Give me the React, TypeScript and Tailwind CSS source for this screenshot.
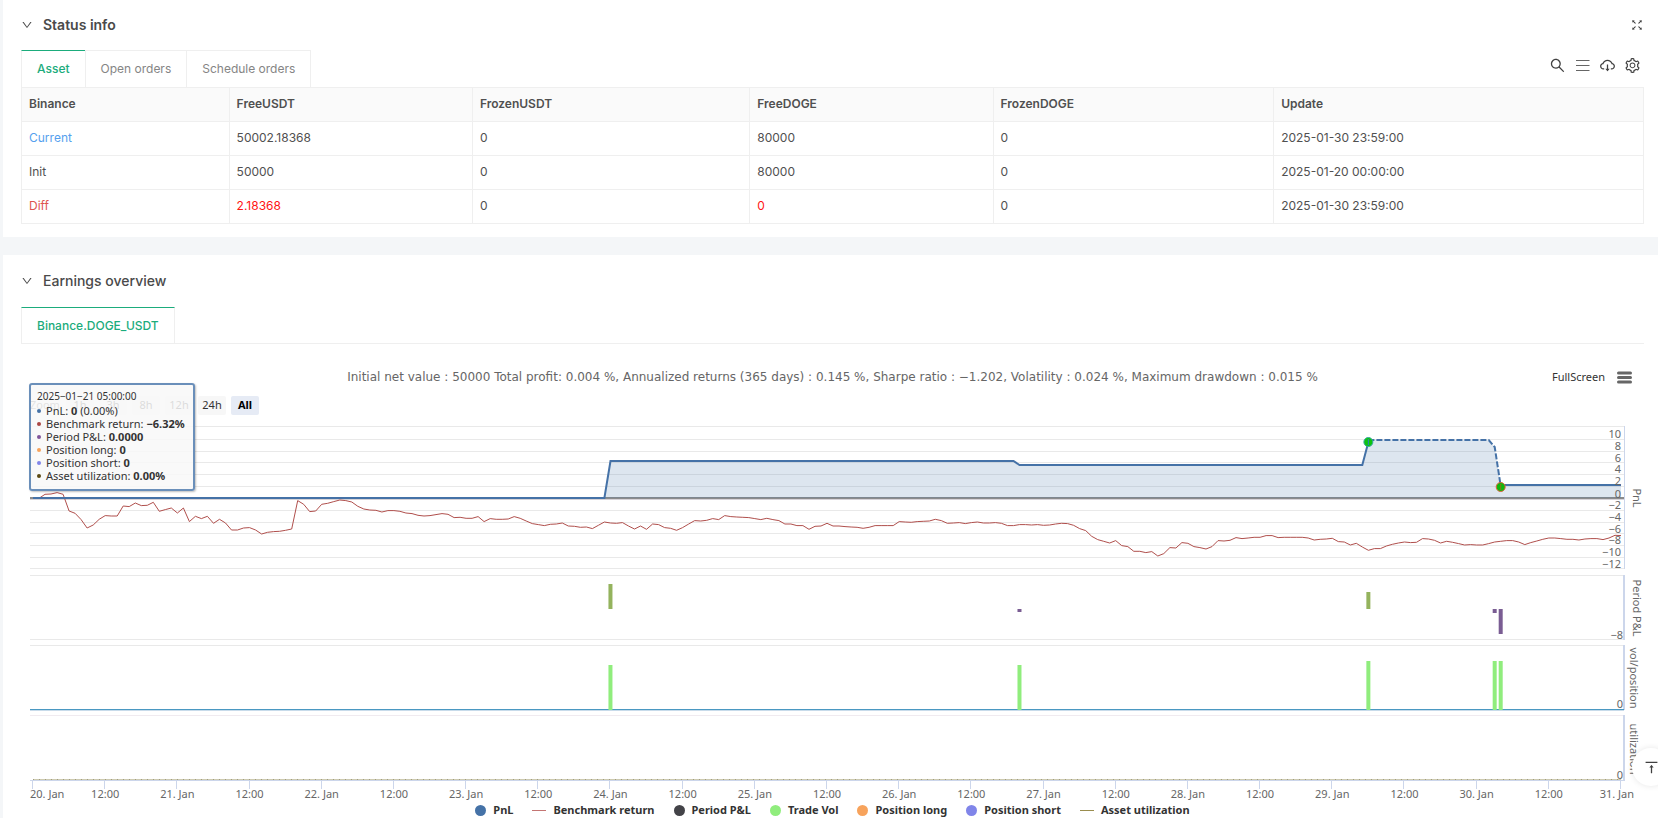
import React, { useLayoutEffect, useRef, useState } from "react";
import {
  AiOutlineCloudDownload,
  AiOutlineDown,
  AiOutlineFullscreen,
  AiOutlineSearch,
  AiOutlineSetting,
  AiOutlineVerticalAlignTop,
} from "react-icons/ai";

/* ---------- data ---------- */

const COLUMNS = [
  { name: "Binance", width: "w-[12.8%]" },
  { name: "FreeUSDT", width: "w-[15%]" },
  { name: "FrozenUSDT", width: "w-[17.1%]" },
  { name: "FreeDOGE", width: "w-[15%]" },
  { name: "FrozenDOGE", width: "w-[17.3%]" },
  { name: "Update", width: "w-[22.8%]" },
];

const ROWS: { cells: string[]; tone: string; red: number[] }[] = [
  { cells: ["Current", "50002.18368", "0", "80000", "0", "2025-01-30 23:59:00"], tone: "text-[#569fee]", red: [] },
  { cells: ["Init", "50000", "0", "80000", "0", "2025-01-20 00:00:00"], tone: "", red: [] },
  { cells: ["Diff", "2.18368", "0", "0", "0", "2025-01-30 23:59:00"], tone: "text-[#de5450]", red: [1, 3] },
];

const RANGES = ["1h", "3h", "8h", "12h", "24h", "All"];

const TOOLTIP = [
  { label: "PnL", value: "0", tail: " (0.00%)", dot: "bg-[#4572a7]" },
  { label: "Benchmark return", value: "−6.32%", tail: "", dot: "bg-[#aa4643]" },
  { label: "Period P&L", value: "0.0000", tail: "", dot: "bg-[#80559b]" },
  { label: "Position long", value: "0", tail: "", dot: "bg-[#f7a35c]" },
  { label: "Position short", value: "0", tail: "", dot: "bg-[#8085e9]" },
  { label: "Asset utilization", value: "0.00%", tail: "", dot: "bg-[#5c4a12]" },
];

const LEGEND = [
  { label: "PnL", line: false, color: "bg-[#4572a7]" },
  { label: "Benchmark return", line: true, color: "bg-[#c47573]" },
  { label: "Period P&L", line: false, color: "bg-[#434348]" },
  { label: "Trade Vol", line: false, color: "bg-[#90ed7d]" },
  { label: "Position long", line: false, color: "bg-[#f7a35c]" },
  { label: "Position short", line: false, color: "bg-[#8085e9]" },
  { label: "Asset utilization", line: true, color: "bg-[#9a8d4e]" },
];

/* Hourly benchmark samples, in thirds of a pixel below the top of the band. */
const BENCHMARK = [
  54, 54, 42, 41, 37, 42, 92, 99, 118, 143, 134, 117, 106, 107, 107, 77, 79, 68, 76, 75, 66, 93, 88, 83, 98, 83, 124,
  108, 115, 108, 129, 117, 128, 149, 149, 143, 142, 149, 161, 156, 154, 153, 150, 146, 61, 72, 94, 92, 72, 69, 64, 59,
  61, 65, 78, 86, 89, 90, 95, 91, 91, 93, 98, 100, 105, 107, 106, 103, 100, 102, 112, 111, 114, 114, 109, 124, 115, 117,
  117, 116, 109, 114, 122, 130, 133, 136, 132, 131, 128, 137, 138, 141, 140, 145, 135, 125, 128, 129, 127, 137, 146,
  137, 147, 131, 133, 142, 144, 150, 142, 131, 121, 122, 120, 115, 118, 106, 109, 110, 111, 112, 115, 118, 114, 118,
  121, 131, 131, 136, 136, 147, 138, 137, 129, 137, 137, 139, 140, 141, 144, 141, 136, 136, 136, 136, 124, 125, 126,
  124, 123, 122, 117, 121, 129, 128, 127, 130, 127, 125, 128, 128, 127, 129, 136, 136, 133, 133, 134, 133, 135, 134,
  131, 129, 130, 135, 145, 151, 168, 178, 183, 188, 181, 196, 199, 213, 213, 217, 214, 227, 220, 202, 203, 187, 189,
  199, 202, 206, 199, 181, 182, 180, 172, 175, 173, 171, 171, 166, 166, 172, 171, 171, 171, 171, 173, 179, 177, 176,
  174, 184, 185, 194, 189, 200, 210, 205, 205, 197, 192, 188, 185, 187, 186, 175, 176, 180, 188, 183, 186, 190, 194,
  193, 194, 194, 190, 185, 183, 181, 181, 185, 193, 187, 182, 177, 173, 173, 175, 177, 177, 179, 176, 175, 175, 178,
  173, 165, 166,
];

/* [hour, y] */
const PNL_BEFORE: [number, number][] = [[0, 78], [95, 78], [96, 41], [163, 41], [164, 45], [221, 45], [222, 22]];
const PNL_HELD: [number, number][] = [[222, 20], [242, 20], [243, 27], [244, 66]];
const PNL_AFTER: [number, number][] = [[244, 65], [264, 65]];

const HOURS = 264;
const GRID = [6, 19, 31, 42, 54, 66, 90, 102, 113, 125, 137, 148];
const PNL_TICKS: [string, number][] = [
  ["10", 14], ["8", 26], ["6", 38], ["4", 49], ["2", 61], ["0", 74],
  ["−2", 85], ["−4", 97], ["−6", 109], ["−8", 120], ["−10", 132], ["−12", 144],
];
const PERIOD_BARS = [
  { hour: 96, y: 164, h: 25, fill: "#94b35d" },
  { hour: 164, y: 189, h: 3, fill: "#7a5d93" },
  { hour: 222, y: 172, h: 17, fill: "#94b35d" },
  { hour: 243, y: 189, h: 4, fill: "#7a5d93" },
  { hour: 244, y: 189, h: 25, fill: "#7a5d93" },
];
const VOLUME_BARS = [
  { hour: 96, y: 245 },
  { hour: 164, y: 245 },
  { hour: 222, y: 241 },
  { hour: 243, y: 241 },
  { hour: 244, y: 241 },
];

/* ---------- pieces ---------- */

function SectionTitle({ title, className }: { title: string; className: string }) {
  return (
    <button type="button" className={`flex items-center gap-[10px] text-[14px] leading-5 text-[#4a4a4a] ${className}`}>
      <AiOutlineDown className="size-3" />
      {title}
    </button>
  );
}

function Tab({ label, active, last }: { label: string; active?: boolean; last?: boolean }) {
  return (
    <button
      type="button"
      role="tab"
      aria-selected={!!active}
      className={`h-full border-t border-l px-[15px] text-[12px] ${last ? "border-r border-r-[#efefef]" : ""} ${
        active ? "border-t-[#1bac7c] border-l-[#efefef] font-medium text-[#1bac7c]" : "border-[#efefef] text-[#858585]"
      }`}
    >
      {label}
    </button>
  );
}

function AssetTable() {
  return (
    <table className="w-full table-fixed border-collapse text-left text-[12px] leading-4 text-[#505050]">
      <thead>
        <tr className="h-[34px] bg-[#fafafa]">
          {COLUMNS.map((c) => (
            <th key={c.name} scope="col" className={`border border-[#efefef] px-[7px] pb-px font-semibold ${c.width}`}>
              {c.name}
            </th>
          ))}
        </tr>
      </thead>
      <tbody>
        {ROWS.map((row) => (
          <tr key={row.cells[0]} className="h-[34px]">
            {row.cells.map((cell, i) => (
              <td
                key={i}
                className={`border border-[#efefef] px-[7px] pb-px ${i === 0 ? row.tone : ""} ${row.red.includes(i) ? "text-[#ff1414]" : ""}`}
              >
                {cell}
              </td>
            ))}
          </tr>
        ))}
      </tbody>
    </table>
  );
}

function Plot() {
  const ref = useRef<HTMLDivElement>(null);
  const [width, setWidth] = useState(1623);

  useLayoutEffect(() => {
    const el = ref.current;
    if (!el) return;
    const measure = () => setWidth(el.clientWidth);
    measure();
    const observer = new ResizeObserver(measure);
    observer.observe(el);
    return () => observer.disconnect();
  }, []);

  const left = 9;
  const right = width - 20;
  const x = (hour: number) => 12 + (hour * (width - 35)) / HOURS;
  const points = (list: [number, number][]) => list.map(([h, y]) => `${x(h).toFixed(1)},${y}`).join(" ");
  const area = [...PNL_BEFORE, ...PNL_HELD, ...PNL_AFTER];
  const days = Array.from({ length: 23 }, (_, i) => i);

  return (
    <div ref={ref} className="w-full min-w-0">
      <svg width={width} height={383} className="block" role="img" aria-label="Earnings chart">
        <g stroke="#e9e9e9" shapeRendering="crispEdges">
          {GRID.map((y) => (
            <line key={y} x1={left} x2={right} y1={y + 0.5} y2={y + 0.5} />
          ))}
          {[155, 219, 225].map((y) => (
            <line key={y} x1={left} x2={right} y1={y + 0.5} y2={y + 0.5} />
          ))}
          <line x1={left} x2={right} y1={295.5} y2={295.5} stroke="#f0ebf0" />
        </g>
        <g fill="#ccd6eb">
          <rect x={right} y={6} width={1} height={143} />
          <rect x={right - 1} y={155} width={2} height={65} />
          <rect x={right - 1} y={225} width={2} height={65} />
          <rect x={right - 1} y={295} width={2} height={66} />
          <rect x={left} y={360} width={right - left} height={1} />
          {days.map((i) => (
            <rect key={i} x={Math.round(x(i * 12)) - 1} y={361} width={1} height={8} />
          ))}
        </g>

        <rect x={left} y={77} width={right - left} height={2} fill="#8b8b8b" />
        <rect x={left} y={79} width={right - left} height={1} fill="#d6d3d8" />
        <polygon points={`${points(area)} ${x(264)},78 ${x(0)},78`} fill="#4572a7" fillOpacity={0.18} />
        <polyline
          points={BENCHMARK.map((v, h) => `${x(h).toFixed(1)},${(60.3 + v / 3).toFixed(1)}`).join(" ")}
          fill="none"
          stroke="#b04f4c"
          strokeWidth={1}
          strokeLinejoin="round"
        />
        <g fill="none" stroke="#4572a7" strokeWidth={2}>
          <polyline points={points(PNL_BEFORE)} />
          <polyline points={points(PNL_HELD)} strokeDasharray="6 2" />
          <polyline points={points(PNL_AFTER)} />
        </g>
        <circle cx={x(222)} cy={22} r={4.5} fill="#0cc40c" stroke="#35a8a0" />
        <rect x={x(222) - 0.5} y={19} width={1} height={6} fill="#2b7fc0" />
        <circle cx={x(244)} cy={67} r={4.5} fill="#0fb80f" stroke="#e0643c" />
        <rect x={x(244) - 0.5} y={64} width={1} height={6} fill="#8a7a12" />

        {PERIOD_BARS.map((b) => (
          <rect key={b.hour} x={x(b.hour) - 2} y={b.y} width={4} height={b.h} fill={b.fill} />
        ))}

        <rect x={left} y={289} width={right - left} height={1} fill="#4a98c2" />
        <rect x={left} y={290} width={right - left} height={1} fill="#c8dbea" />
        {VOLUME_BARS.map((b) => (
          <rect key={b.hour} x={x(b.hour) - 2} y={b.y} width={4} height={290 - b.y} fill="#90ed7d" />
        ))}

        <line x1={12} x2={x(264)} y1={359.5} y2={359.5} stroke="#cdcab0" />
        <line x1={12} x2={x(264)} y1={359.5} y2={359.5} stroke="#a19e80" strokeDasharray="1 5" />

        <g className="text-[11px]" fill="#666666">
          {PNL_TICKS.map(([label, y]) => (
            <text key={label} x={width - 23} y={y + 4} textAnchor="end">
              {label}
            </text>
          ))}
          <text x={width - 21} y={219} textAnchor="end">−8</text>
          <text x={width - 21} y={288} textAnchor="end">0</text>
          <text x={width - 21} y={359} textAnchor="end">0</text>
          {days.map((i) => (
            <text
              key={i}
              x={i === 0 ? left : i === 22 ? width - 10 : x(i * 12)}
              y={378}
              textAnchor={i === 0 ? "start" : i === 22 ? "end" : "middle"}
            >
              {i % 2 ? "12:00" : `${20 + i / 2}. Jan`}
            </text>
          ))}
          <text transform={`translate(${width - 11} 78) rotate(90)`} textAnchor="middle">PnL</text>
          <text transform={`translate(${width - 11} 188) rotate(90)`} textAnchor="middle">Period P&amp;L</text>
          <text transform={`translate(${width - 14} 258) rotate(90)`} textAnchor="middle">vol/position</text>
          <text transform={`translate(${width - 14} 329) rotate(90)`} textAnchor="middle">utilization</text>
        </g>
      </svg>
    </div>
  );
}

function EarningsChart() {
  return (
    <div className="relative pt-[23px] font-['Noto_Sans','Open_Sans',sans-serif] text-[11px] text-[#333333]">
      <div className="grid h-5 grid-cols-[1fr_auto_1fr] items-center">
        <h3 className="col-start-2 font-['DejaVu_Sans',sans-serif] text-[12px] font-normal text-[#666666]">
          Initial net value : 50000 Total profit: 0.004 %, Annualized returns (365 days) : 0.145 %, Sharpe ratio :
          −1.202, Volatility : 0.024 %, Maximum drawdown : 0.015 %
        </h3>
        <div className="flex items-center justify-end gap-3 pr-3">
          <button type="button">FullScreen</button>
          <button type="button" aria-label="Chart menu">
            <svg width="15" height="13" viewBox="0 0 15 13" stroke="#666666" strokeWidth="3" strokeLinecap="round">
              <path d="M1.5 2H13.500M1.500 6.500H13.500M1.500 11H13.500" />
            </svg>
          </button>
        </div>
      </div>

      <div className="mt-[9px] flex h-[19px] items-center gap-[5px] pl-[9px]">
        <span className="w-[31px] text-[#666666]">Zoom</span>
        {RANGES.map((range) => (
          <button
            key={range}
            type="button"
            className={`h-[19px] w-7 rounded-[2px] ${range === "All" ? "bg-[#e6ebf5] font-bold text-black" : "bg-[#f7f7f7]"}`}
          >
            {range}
          </button>
        ))}
      </div>

      <div className="pt-[5px]">
        <Plot />
      </div>

      <ul className="flex items-center justify-center gap-[19px] text-[11px] leading-[14px] font-bold">
        {LEGEND.map((item) => (
          <li key={item.label} className="flex items-center gap-[7px]">
            <span className={`${item.line ? "h-px w-[14px]" : "size-[11px] rounded-full"} ${item.color}`} />
            {item.label}
          </li>
        ))}
      </ul>

      <div className="absolute top-[39px] left-2 h-[108px] w-[166px] rounded-[3px] border-2 border-[#6a8fba] bg-[#f8f8f8]/85 pt-[5px] pl-[6px] leading-[13px] whitespace-nowrap shadow-[1px_1px_2px_rgba(0,0,0,0.25)]">
        <div className="mb-px text-[10px]">2025−01−21 05:00:00</div>
        {TOOLTIP.map((row) => (
          <div key={row.label} className="flex items-center gap-[5px]">
            <span className={`size-1 rounded-full ${row.dot}`} />
            <span>
              {row.label}: <b>{row.value}</b>
              {row.tail}
            </span>
          </div>
        ))}
      </div>
    </div>
  );
}

export default function App() {
  return (
    <div className="flex min-h-screen flex-col gap-[18px] bg-[#f4f6f8] pl-[3px] font-['Inter','Liberation_Sans',sans-serif]">
      <section className="bg-white px-[14px] pb-[13px] pl-[18px]">
        <div className="flex h-[50px] items-center justify-between">
          <SectionTitle title="Status info" className="font-semibold" />
          <button type="button" aria-label="Full screen" className="text-[#404040]">
            <AiOutlineFullscreen className="size-[14px]" />
          </button>
        </div>
        <div className="flex items-center justify-between">
          <div role="tablist" className="flex h-[37px]">
            <Tab label="Asset" active />
            <Tab label="Open orders" />
            <Tab label="Schedule orders" last />
          </div>
          <div className="flex items-center gap-2 pr-[3px] pb-[6px] text-[#404040]">
            <button type="button" aria-label="Search">
              <AiOutlineSearch className="size-[17px]" />
            </button>
            <button type="button" aria-label="List">
              <svg width="17" height="17" viewBox="0 0 17 17" stroke="#666666">
                <path d="M2 3.500H15.500M2 8.500H15.500M2 13.500H15.500" />
              </svg>
            </button>
            <button type="button" aria-label="Download">
              <AiOutlineCloudDownload className="size-[17px]" />
            </button>
            <button type="button" aria-label="Settings">
              <AiOutlineSetting className="size-[17px]" />
            </button>
          </div>
        </div>
        <AssetTable />
      </section>

      <section className="flex-1 bg-white pr-[14px] pl-[18px]">
        <div className="flex h-[52px] items-center">
          <SectionTitle title="Earnings overview" className="font-medium" />
        </div>
        <div role="tablist" className="flex h-[37px] border-b border-[#efefef]">
          <Tab label="Binance.DOGE_USDT" active last />
        </div>
        <EarningsChart />
      </section>

      <button
        type="button"
        aria-label="Back to top"
        className="fixed -right-3 bottom-8 flex size-[38px] items-center justify-center rounded-full bg-white text-[#404040] shadow-[0_0_6px_rgba(0,0,0,0.10)]"
      >
        <AiOutlineVerticalAlignTop className="size-[17px]" />
      </button>
    </div>
  );
}
